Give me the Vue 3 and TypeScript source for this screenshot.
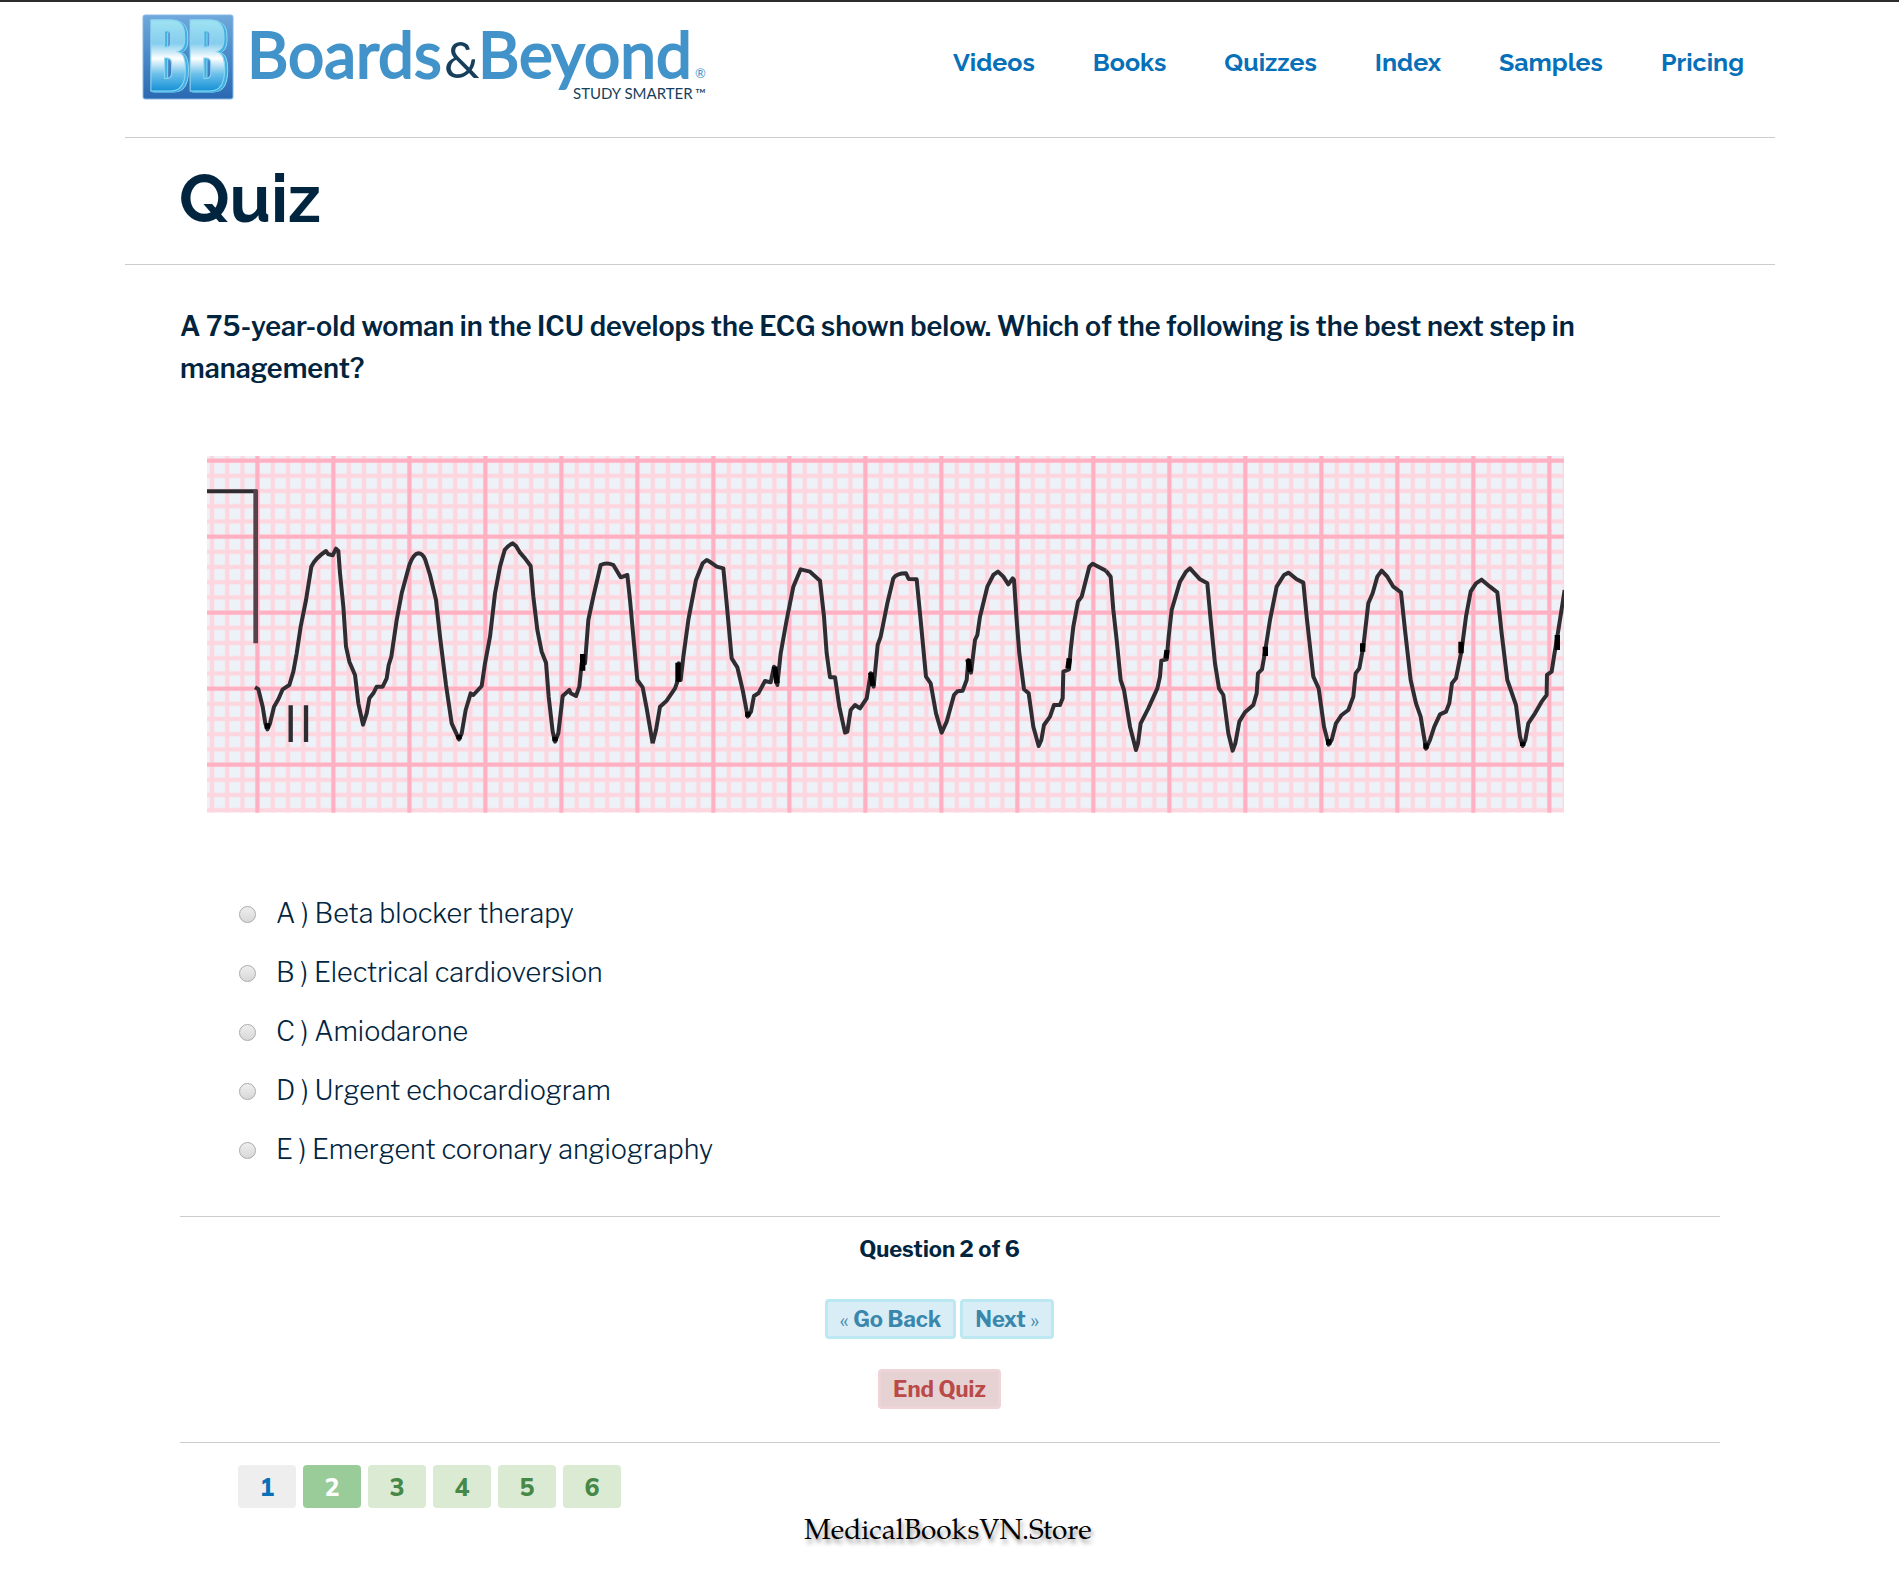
<script setup lang="ts">
import { ref } from 'vue'

interface Answer {
  key: string
  text: string
}

const navLinks: string[] = ['Videos', 'Books', 'Quizzes', 'Index', 'Samples', 'Pricing']

const answers: Answer[] = [
  { key: 'A', text: 'Beta blocker therapy' },
  { key: 'B', text: 'Electrical cardioversion' },
  { key: 'C', text: 'Amiodarone' },
  { key: 'D', text: 'Urgent echocardiogram' },
  { key: 'E', text: 'Emergent coronary angiography' },
]

const total = 6
const current = ref<number>(2)
const selected = ref<string>('')

function go(step: number): void {
  current.value = Math.min(total, Math.max(1, current.value + step))
}
</script>

<template>
  <div class="page">
    <header class="header">
      <a class="logo" href="#" aria-label="Boards and Beyond">
        <svg width="580" height="100" viewBox="0 0 580 100">
          <defs>
            <linearGradient id="tile" x1="0" y1="0" x2="0" y2="1">
              <stop offset="0" stop-color="#6fa9dc" />
              <stop offset="0.5" stop-color="#4a88c8" />
              <stop offset="1" stop-color="#2a68b2" />
            </linearGradient>
            <linearGradient id="face" gradientUnits="userSpaceOnUse" x1="0" y1="12" x2="0" y2="80">
              <stop offset="0" stop-color="#9ce0f2" />
              <stop offset="0.3" stop-color="#86cdee" />
              <stop offset="0.52" stop-color="#ffffff" />
              <stop offset="0.75" stop-color="#6cc0ea" />
              <stop offset="1" stop-color="#1590d6" />
            </linearGradient>
          </defs>
          <rect x="2" y="4" width="90" height="84" rx="2" fill="url(#tile)" stroke="#86b8e2" />
          <text class="mark" x="46" y="80" text-anchor="middle">BB</text>
          <text class="word" x="106" y="67">Boards</text>
          <text class="amp" x="303" y="67">&amp;</text>
          <text class="word" x="337" y="67">Beyond</text>
          <text class="reg" x="554" y="67">®</text>
          <text class="tag" x="432" y="88">STUDY SMARTER</text>
          <text class="tm" x="554" y="88">™</text>
        </svg>
      </a>
      <nav class="nav">
        <a v-for="link in navLinks" :key="link" href="#">{{ link }}</a>
      </nav>
    </header>

    <h1 class="title">Quiz</h1>

    <main class="content">
      <p class="question">
        A 75-year-old woman in the ICU develops the ECG shown below. Which of the following is the
        best next step in management?
      </p>

      <svg class="ecg" viewBox="21 18 4071 1070" role="img" aria-label="ECG strip, lead II">
        <defs>
          <pattern id="minor" patternUnits="userSpaceOnUse" x="150" y="9" width="45.6" height="45.6">
            <rect width="45.6" height="45.6" fill="#edf2f8" />
            <path d="M22.8 0V45.6M0 22.8H45.6" stroke="#fdd6df" stroke-width="13" />
          </pattern>
          <pattern id="major" patternUnits="userSpaceOnUse" x="58" y="-82" width="228" height="228">
            <path d="M114 0V228M0 114H228" stroke="#ffb0c3" stroke-width="12" />
          </pattern>
        </defs>
        <rect x="21" y="18" width="4071" height="1070" fill="url(#minor)" />
        <rect x="21" y="18" width="4071" height="1070" fill="url(#major)" />
        <g class="trace">
          <path d="M21 124H172" />
          <path d="M167 120V580" stroke-width="14" stroke="#54434b" />
          <path d="M272 766V876M318 766V876" stroke-width="13" />
          <path
            d="M165 712L175 718L188 770L196 820L202 838L210 820L222 770L235 748L248 718L268 705L280 665L290 610L302 530L318 450L334 350Q345 325 378 303L384 312L398 316L408 296L415 303L420 370L430 470L438 590L448 635L465 675L475 760L489 824L500 790L508 745L520 730L530 710L548 710L560 685L566 645L574 620L590 510L605 430L628 345Q640 312 655 310Q668 310 676 330L690 375L708 450L720 560L738 705L755 820L777 868L785 850L797 780L812 730L820 735L845 708L855 640L870 560L885 430L900 350L914 300Q925 285 938 280L948 288L960 308L975 325L992 348L1000 440L1012 540L1025 605L1038 638L1046 740L1058 845L1065 875L1075 850L1088 738L1108 720L1112 730L1128 738L1138 710L1145 640L1155 640L1165 510L1180 440L1202 345Q1220 336 1240 345L1262 382L1282 375L1290 450L1300 560L1312 690L1328 712L1340 775L1358 880"
          />
          <path
            transform="translate(1350)"
            d="M8 880L18 840L30 770L50 752L75 715L84 690L86 640L92 690L100 620L115 510L138 390L158 340L170 330Q180 335 200 350L220 355L230 460L245 625L262 652L278 720L293 800L303 785L312 738L325 730L345 693L362 697L372 650L382 705L392 610L410 510L430 410L452 358L480 365L510 392L522 500L530 610L540 682L555 682L568 770L585 848L592 845L602 780L615 765L630 775L650 745L662 670L671 710L683 585L692 560L712 460L730 385Q740 370 768 370L776 387L800 388L810 490L828 680L842 700L858 790L875 848L890 815L912 735L922 724L938 722L950 690L955 630L963 668L975 570L982 555L990 500L1012 410L1030 375L1044 365L1060 380L1075 403L1088 385L1092 390L1100 510L1108 610L1122 718L1136 730L1150 830L1166 888L1174 870L1182 825L1200 800L1212 765L1230 765L1238 745L1240 665L1257 658L1262 600L1270 530L1284 455L1295 440L1318 350L1328 341L1345 350L1368 362"
          />
          <path
            transform="translate(2700)"
            d="M18 362L32 380L40 480L50 570L62 690L72 720L90 830L108 900L114 880L122 820L145 775L172 715L180 680L184 632L200 628L206 560L215 480L240 395L258 365L270 355L300 388L322 400L332 510L345 640L357 715L370 735L385 850L398 902L406 880L418 815L435 787L460 765L470 730L474 670L486 658L496 600L510 510L530 410L552 375L566 368L590 388L610 398L620 500L640 680L656 715L672 830L686 884L695 870L708 820L725 795L745 780L760 740L767 670L778 655L790 590L805 460L818 430L832 380L845 362L862 380L880 410L903 427L915 540L932 690L948 760L962 800L978 896L990 870L1003 830L1020 793L1038 785L1048 760L1056 700L1068 685L1085 600L1098 500L1112 425L1128 400L1145 389L1170 410L1192 427L1205 550L1222 690L1248 765L1260 860L1268 888L1276 870L1285 820L1305 790L1325 755L1340 735L1341 675L1355 665L1362 620L1372 560L1394 420"
          />
          <path
            class="notch"
            d="M1148 612V662M1434 638V695M1724 650L1731 700M2012 668L2019 708M2304 628L2311 665M2604 655L2608 625M2898 625L2901 600M3196 590V618M3488 580V605M3783 575V610M4072 555V600M202 820V836M777 855V868M1065 860V874M1643 785V800M3386 868V884M3678 880V896M3968 875V888"
          />
        </g>
      </svg>

      <form class="answers" @submit.prevent>
        <label v-for="a in answers" :key="a.key" class="answer">
          <input v-model="selected" type="radio" name="answer" :value="a.key" />
          <span>{{ a.key }} ) {{ a.text }}</span>
        </label>
      </form>

      <section class="controls">
        <p class="progress">Question {{ current }} of {{ total }}</p>
        <div class="steps">
          <button type="button" class="btn info" @click="go(-1)"><small>«</small> Go Back</button>
          <button type="button" class="btn info" @click="go(1)">Next <small>»</small></button>
        </div>
        <button type="button" class="btn danger">End Quiz</button>
      </section>

      <nav class="pages" aria-label="Questions">
        <a
          v-for="n in total"
          :key="n"
          href="#"
          :class="{ seen: n === 1, current: n === current }"
          @click.prevent="current = n"
          >{{ n }}</a
        >
      </nav>
    </main>

    <footer class="footer">MedicalBooksVN.Store</footer>
  </div>
</template>

<style>
body {
  margin: 0;
  background: #fff;
}
</style>

<style scoped>
.page {
  box-sizing: border-box;
  border-top: 2px solid #2d2b2c;
  padding: 0 124px 0 125px;
  color: #02253f;
  font-family: 'Libre Franklin', Inter, sans-serif;
}
.header {
  display: flex;
  justify-content: space-between;
  align-items: flex-start;
  height: 135px;
  border-bottom: 1px solid #ccc;
}
.logo {
  margin: 9px 0 0 16px;
}
.logo svg {
  display: block;
  overflow: visible;
}
.mark {
  font: 400 82px Anton, Roboto, sans-serif;
  fill: url(#face);
  stroke: #8fd6f0;
  stroke-width: 1px;
  filter: drop-shadow(2px 1px 0 #3fb0e2) drop-shadow(1px 0 0 #8fd8f2);
}
.word {
  font: 400 64px Lato, sans-serif;
  fill: #4293ca;
  stroke: #4293ca;
  stroke-width: 2px;
}
.amp {
  font: 400 50px Lato, sans-serif;
  fill: #173f5c;
}
.reg {
  font: 400 13px Lato, sans-serif;
  fill: #4293ca;
}
.tag {
  font: 400 15px Lato, sans-serif;
  fill: #173f5c;
}
.tm {
  font: 400 14px Lato, sans-serif;
  fill: #173f5c;
}
.nav {
  display: flex;
  gap: 58px;
  margin: 42px 31px 0 0;
}
.nav a {
  color: #0670b8;
  font: 700 25px/36px Raleway, Inter, sans-serif;
  text-decoration: none;
}
.title {
  margin: 0;
  padding: 21px 54px 25px;
  border-bottom: 1px solid #ccc;
  font: 700 67px/80px Raleway, Inter, sans-serif;
}
.content {
  padding: 0 55px;
}
.question {
  margin: 41px 0 66px;
  padding-right: 120px;
  font-size: 27px;
  font-weight: 600;
  line-height: 42px;
}
.ecg {
  display: block;
  box-sizing: border-box;
  width: 100%;
  max-width: 1357px;
  margin-left: 27px;
}
.trace {
  fill: none;
  stroke: #302d32;
  stroke-width: 12px;
  stroke-linejoin: round;
}
.notch {
  stroke: #000;
  stroke-width: 16px;
}
.answers {
  display: flex;
  flex-direction: column;
  padding: 71px 0 37px 59px;
}
.answer {
  display: flex;
  align-items: center;
  gap: 20px;
  height: 59px;
  font-size: 27px;
  font-weight: 300;
}
.answer input {
  appearance: none;
  width: 17px;
  height: 17px;
  margin: 2px 0 0;
  border: 1px solid #aaa;
  border-radius: 50%;
  background: linear-gradient(#eee, #d8d8d8);
}
.answer input:checked {
  background: #0670b8;
}
.controls {
  display: flex;
  flex-direction: column;
  align-items: center;
  gap: 30px;
  padding: 17px 21px 33px 0;
  border-top: 1px solid #ccc;
  border-bottom: 1px solid #ccc;
}
.progress {
  margin: 0 0 5px;
  font-size: 22px;
  font-weight: 700;
  line-height: 30px;
}
.steps {
  display: flex;
  gap: 4px;
}
.btn {
  height: 40px;
  padding: 0 12px;
  border: 3px solid;
  border-radius: 4px;
  font: 700 22px/34px 'Libre Franklin', Inter, sans-serif;
  white-space: nowrap;
}
.btn small {
  font-size: 20px;
  font-weight: 400;
}
.info {
  border-color: #bce8f1;
  background: #d9edf7;
  color: #3a87ad;
}
.danger {
  border-color: #eed3d7;
  background: #e6d1d3;
  color: #b94a48;
}
.pages {
  display: flex;
  gap: 7px;
  padding: 22px 0 0 58px;
}
.pages a {
  width: 58px;
  border-radius: 4px;
  background: #daead3;
  color: #468847;
  font: 800 25px/43px Mulish, Muli, 'Nunito Sans', 'Open Sans', sans-serif;
  text-align: center;
  text-decoration: none;
}
.pages .seen {
  background: #eee;
  color: #0670b8;
}
.pages .current {
  background: #99cc99;
  color: #fff;
}
.footer {
  padding: 7px 4px 0 0;
  color: #000;
  font: 400 28px/36px 'Palatino Linotype', 'Book Antiqua', 'TeX Gyre Pagella', P052,
    'Liberation Serif', serif;
  text-align: center;
  text-shadow: 2px 4px 4px rgba(0, 0, 0, 0.4);
}
</style>
